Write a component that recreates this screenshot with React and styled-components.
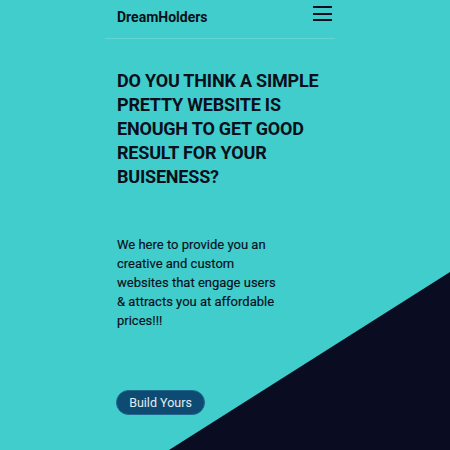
import React from "react";
import styled, { createGlobalStyle } from "styled-components";

const Global = createGlobalStyle`
  html, body { margin: 0; padding: 0; }
  body {
    background: #40cdcb;
    font-family: Roboto, "Liberation Sans", sans-serif;
    color: #0b0f1c;
    overflow: hidden;
  }
`;

const Page = styled.div`
  position: relative;
  width: 450px;
  height: 450px;
  overflow: hidden;
  background: #40cdcb;
`;

const Slant = styled.svg`
  position: absolute;
  left: 0;
  top: 0;
  width: 450px;
  height: 450px;
  pointer-events: none;
`;

const Column = styled.div`
  position: relative;
  width: 230px;
  margin-left: 105px;
  display: flex;
  flex-direction: column;
`;

const NavBar = styled.header`
  height: 38px;
  display: flex;
  align-items: flex-start;
  justify-content: space-between;
  padding: 0 3px 0 12px;
  border-bottom: 1px solid #63d6d3;
`;

const Brand = styled.div`
  font-size: 14px;
  font-weight: 700;
  margin-top: 9px;
  color: #0b0f1c;
`;

const Burger = styled.button`
  margin-top: 6px;
  width: 19px;
  height: 15px;
  padding: 0;
  border: none;
  background: transparent;
  display: flex;
  flex-direction: column;
  justify-content: space-between;
  span {
    display: block;
    height: 2px;
    background: #0b0f1c;
  }
`;

const Body = styled.main`
  padding: 30px 12px 0 12px;
  display: flex;
  flex-direction: column;
`;

const Title = styled.h1`
  margin: 0;
  font-size: 18px;
  line-height: 24px;
  font-weight: 700;
  letter-spacing: -0.2px;
  text-transform: uppercase;
  color: #0b0f1c;
`;

const Lead = styled.p`
  margin: 46px 0 0 0;
  font-size: 13px;
  line-height: 19px;
  color: #0b0f1c;
  width: 168px;
  -webkit-text-stroke: 0.15px #0b0f1c;
`;

const Cta = styled.button`
  margin-top: 60px;
  margin-left: -1px;
  align-self: flex-start;
  width: 89px;
  height: 25px;
  border-radius: 13px;
  background: #0d4b73;
  border: 1px solid #22688c;
  color: #e2ebf2;
  font-family: Roboto, "Liberation Sans", sans-serif;
  font-size: 12.5px;
  padding: 0;
`;

export default function App() {
  return (
    <>
      <Global />
      <Page>
        <Slant viewBox="0 0 450 450">
          <polygon points="450,272 450,450 169,450" fill="#0a0d22" />
        </Slant>
        <Column>
          <NavBar>
            <Brand>DreamHolders</Brand>
            <Burger aria-label="menu">
              <span />
              <span />
              <span />
            </Burger>
          </NavBar>
          <Body>
            <Title>
              Do you think a simple pretty website is enough to get good result for your buiseness?
            </Title>
            <Lead>
              We here to provide you an creative and custom websites that engage users &amp; attracts you at affordable prices!!!
            </Lead>
            <Cta>Build Yours</Cta>
          </Body>
        </Column>
      </Page>
    </>
  );
}
